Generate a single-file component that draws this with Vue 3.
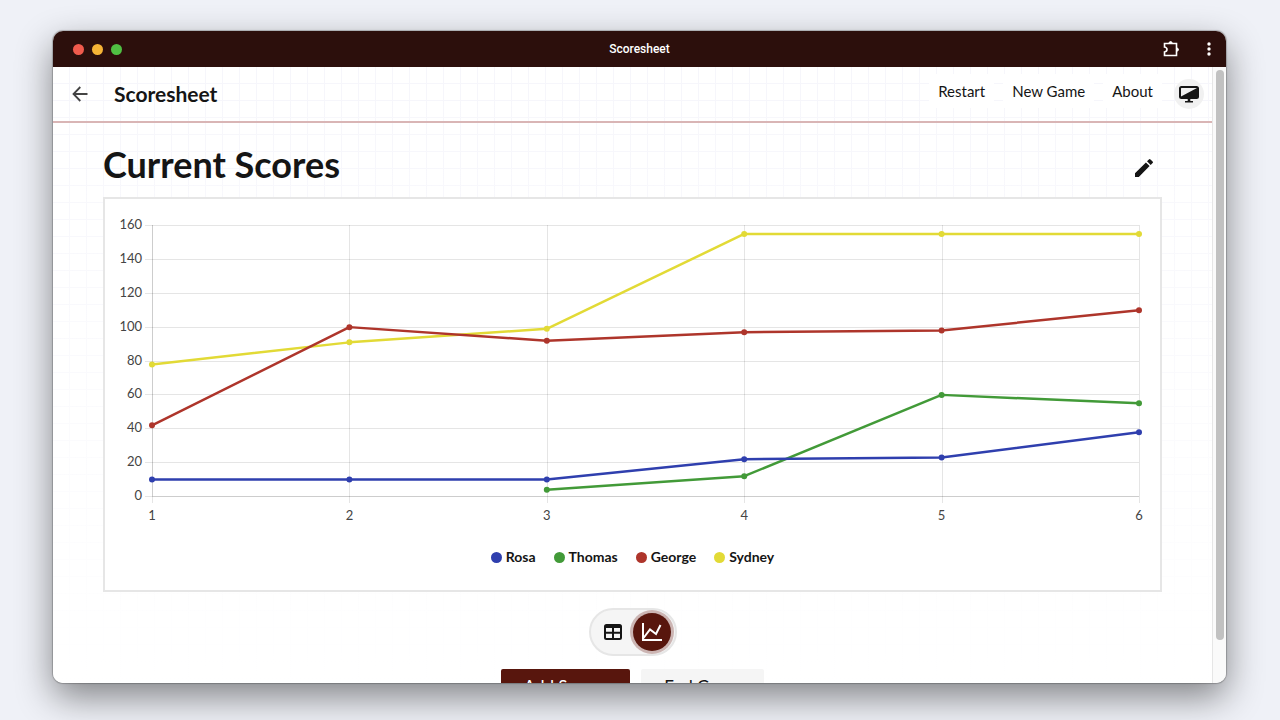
<script setup>
const navLinks = ['Restart', 'New Game', 'About']
const series = [
  { name: 'Sydney', color: '#e2da36', scores: [78, 91, 99, 155, 155, 155] },
  { name: 'George', color: '#ae352b', scores: [42, 100, 92, 97, 98, 110] },
  { name: 'Thomas', color: '#429a38', scores: [null, null, 4, 12, 60, 55] },
  { name: 'Rosa', color: '#2f3fae', scores: [10, 10, 10, 22, 23, 38] },
]
const legend = [...series].reverse()
const ticks = [0, 20, 40, 60, 80, 100, 120, 140, 160]
const rounds = [1, 2, 3, 4, 5, 6]
const x = (round) => 47 + ((round - 1) * 987) / 5
const y = (score) => 297.5 - (score * 271) / 160
const gridY = (score) => Math.round(298 - (score * 271) / 160)
const gridX = (round) => Math.round(x(round))
const dots = (s) =>
  s.scores.map((v, i) => ({ v, cx: x(i + 1), cy: y(v) })).filter((d) => d.v !== null)
const line = (s) => dots(s).map((d) => `${d.cx},${d.cy}`).join(' ')
</script>

<template>
  <div class="desktop">
    <div class="window">
      <div class="titlebar">
        <div class="lights"><i class="red"></i><i class="amber"></i><i class="green"></i></div>
        <span class="window-title">Scoresheet</span>
        <div class="window-actions">
          <button type="button" aria-label="Extensions">
            <svg width="18" height="18" viewBox="0 0 18 18" fill="none" stroke="#fff" stroke-width="1.6">
              <path d="M2.500 3.500h12v12h-12v-3.500q2.500-.5 2.500-2.500T2.500 7z" />
              <path d="M7 3.500a1.600 2 0 0 1 3.200 0zM14.500 8a2 1.600 0 0 1 0 3.200z" fill="#fff" stroke-width="1" />
            </svg>
          </button>
          <button type="button" aria-label="Menu">
            <svg width="6" height="16" viewBox="0 0 6 16" fill="#fff">
              <circle cx="3" cy="3" r="1.700" /><circle cx="3" cy="8" r="1.700" /><circle cx="3" cy="13" r="1.700" />
            </svg>
          </button>
        </div>
      </div>
      <div class="viewport">
        <div class="page">
          <header class="header">
            <button type="button" class="back" aria-label="Back">
              <svg width="16" height="16" viewBox="0 0 16 16" fill="none" stroke="#444" stroke-width="1.8">
                <path d="M15.500 8H1.500M8.300 1L1.500 8l6.800 7" />
              </svg>
            </button>
            <span class="brand">Scoresheet</span>
            <nav class="nav">
              <a v-for="link in navLinks" :key="link" href="#">{{ link }}</a>
            </nav>
            <button type="button" class="theme" aria-label="Theme">
              <svg width="20" height="18" viewBox="0 0 20 18">
                <rect x="1" y="2" width="18" height="11" rx="1.500" fill="none" stroke="#151515" stroke-width="2" />
                <path d="M18 3v10H2v-1.500zM8.700 13h2.600v3H14v1.500H6V16h2.700z" fill="#151515" />
              </svg>
            </button>
          </header>
          <main class="main">
            <div class="heading">
              <h1>Current Scores</h1>
              <button type="button" class="edit" aria-label="Edit">
                <svg width="18" height="18" viewBox="0 0 18 18" fill="#151515">
                  <path d="M0 14.200L10.900 3.400l3.700 3.700L3.800 18H0zM12 2.300L13.900.4q.8-.8 1.600 0l2.100 2.100q.8.8 0 1.600L15.700 6z" />
                </svg>
              </button>
            </div>
            <section class="card">
              <svg class="chart" viewBox="0 0 1055 336" role="img" aria-label="Scores by round">
                <g class="grid">
                  <line v-for="t in ticks" :key="t" x1="40" x2="1034" :y1="gridY(t) - .5" :y2="gridY(t) - .5" />
                  <line v-for="r in rounds" :key="r" :x1="gridX(r) + .5" :x2="gridX(r) + .5" y1="26" y2="304" />
                </g>
                <path class="axis" d="M47.500 26V297.500H1034" />
                <text v-for="t in ticks" :key="t" class="tick" x="37" :y="gridY(t) + 3" text-anchor="end">{{ t }}</text>
                <text v-for="r in rounds" :key="r" class="tick" :x="x(r)" y="321" text-anchor="middle">{{ r }}</text>
                <g v-for="s in series" :key="s.name" :fill="s.color" :stroke="s.color">
                  <polyline :points="line(s)" fill="none" stroke-width="2.500" stroke-linejoin="round" />
                  <circle v-for="d in dots(s)" :key="d.cx" :cx="d.cx" :cy="d.cy" r="3" stroke="none" />
                </g>
              </svg>
              <ul class="legend">
                <li v-for="s in legend" :key="s.name">
                  <svg width="11" height="11" viewBox="0 0 11 11"><circle cx="5.500" cy="5.500" r="5.500" :fill="s.color" /></svg>
                  {{ s.name }}
                </li>
              </ul>
            </section>
            <div class="toggle">
              <button type="button" aria-label="Table view">
                <svg width="18" height="16" viewBox="0 0 18 16" fill="none" stroke="#151515" stroke-width="2">
                  <rect x="1" y="1" width="16" height="14" rx="1.500" /><path d="M1 3h16M1 8.800h16M9 3v12" />
                </svg>
              </button>
              <button type="button" class="active" aria-label="Chart view">
                <svg width="20" height="18" viewBox="0 0 20 18" fill="none" stroke="#fff" stroke-width="2">
                  <path d="M1 0v17h19M1.500 15L8 6.500l6 4.500L18.500 2" />
                </svg>
              </button>
            </div>
            <div class="actions">
              <button type="button" class="primary">Add Scores</button>
              <button type="button">End Game</button>
            </div>
          </main>
        </div>
        <div class="scrollbar"><div class="thumb"></div></div>
      </div>
    </div>
  </div>
</template>

<style>
body { margin: 0; }
</style>

<style scoped>
* { box-sizing: border-box; }
button { border: 0; padding: 0; background: none; font: inherit; color: inherit; display: flex; align-items: center; justify-content: center; }
svg { display: block; }
.desktop { height: 100vh; padding: 31px 54px 37px 53px; background: #eff1f7; display: flex; overflow: hidden; font-family: "Lato", "Liberation Sans", sans-serif; color: #151515; }
.window { flex: 1; min-width: 0; display: flex; flex-direction: column; border-radius: 10px; overflow: hidden; background: #fff; box-shadow: 0 0 1px 1px rgba(0, 0, 0, .22), 0 14px 36px rgba(0, 0, 0, .46); }
.titlebar { flex: none; height: 36px; padding: 0 14px 0 20px; background: #2c0f0c; display: grid; grid-template-columns: 1fr auto 1fr; align-items: center; color: #fff; }
.lights { display: flex; gap: 8px; }
.lights i { width: 11px; height: 11px; border-radius: 50%; }
.red { background: #f05b4d; }
.amber { background: #f6b436; }
.green { background: #50c043; }
.window-title { margin-right: 6px; font: 500 12px/16px Roboto, sans-serif; }
.window-actions { display: flex; justify-content: flex-end; align-items: center; gap: 26px; }
.viewport { flex: 1; min-height: 0; display: flex; }
.page {
  flex: 1; min-width: 0; overflow: hidden;
  background-image: linear-gradient(to bottom, rgba(255, 255, 255, 0), #fff 620px), linear-gradient(to right, #f6f6fb 1px, transparent 1px), linear-gradient(to bottom, #f6f6fb 1px, transparent 1px);
  background-size: 100% 100%, 17px 17px, 17px 17px;
  background-position: 0 0, 16px 0, 0 16px;
}
.header { height: 56px; padding: 0 8px 0 19px; border-bottom: 2px solid #d9b5b5; display: flex; align-items: center; }
.brand { margin-left: 26px; font: 700 21px/28px Lato, sans-serif; }
.nav { margin-left: auto; display: flex; gap: 9px; padding-bottom: 6px; }
.nav a { padding: 7px 9px; font: 15px/20px Lato, sans-serif; color: inherit; text-decoration: none; background: #fff; }
.theme { width: 30px; height: 30px; margin-left: 12px; border-radius: 50%; background: #f1f1f1; }
.main { padding: 0 50px; display: flex; flex-direction: column; align-items: center; }
.heading { width: 100%; height: 74px; padding: 16px 9px 0 0; display: flex; align-items: center; justify-content: space-between; }
h1 { margin: 0 0 8px; font: 700 36px/48px Lato, sans-serif; }
.card { width: 100%; border: 2px solid #e6e6e6; background: #fff; padding-bottom: 22px; }
.chart { width: 100%; height: auto; }
.grid { stroke: #000; stroke-opacity: .1; }
.axis { fill: none; stroke: #000; stroke-opacity: .1; }
.tick { font: 13px Lato, sans-serif; fill: #444; }
.legend { margin: 0; padding: 11px 0 0; list-style: none; display: flex; justify-content: center; gap: 18px; font: 700 14px/22px Lato, sans-serif; }
.legend li { display: flex; align-items: center; gap: 4px; }
.toggle { margin-top: 16px; height: 48px; width: 88px; border: 2px solid #e6e6e6; border-radius: 24px; background: #f5f5f5; display: flex; align-items: center; gap: 1px; padding-left: 3px; }
.toggle button { width: 38px; height: 38px; border-radius: 50%; }
.toggle .active { background: #58160d; box-shadow: 0 0 0 3px #ccb5b3; }
.actions { margin-top: 13px; display: flex; gap: 11px; font-size: 17px; line-height: 20px; }
.actions button { width: 123px; height: 36px; border-radius: 2px; background: #f5f5f5; }
.actions .primary { width: 129px; background: #58160d; color: #fff; }
.scrollbar { flex: none; width: 14px; padding: 3px 2px 0 3px; border-left: 1px solid #e6e6e6; background: #fafafa; }
.thumb { height: 93%; border-radius: 4px; background: #c1c1c1; }
</style>
